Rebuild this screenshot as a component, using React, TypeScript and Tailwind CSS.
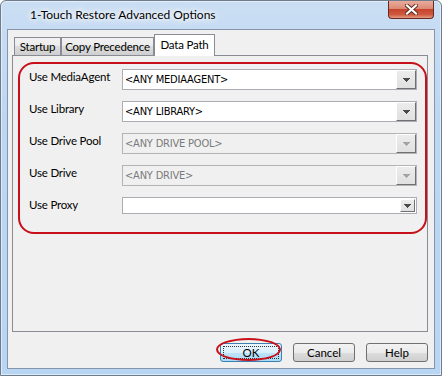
import React from 'react';

const ui = "font-['Lato','Noto_Sans',sans-serif]";
const shell = "font-['DejaVu_Sans_Condensed','DejaVu_Sans',sans-serif]";

function Arrow({ disabled }: { disabled?: boolean }) {
  const c = disabled ? '#a3a3a3' : '#4a4a4a';
  return (
    <svg width="7" height="4" viewBox="0 0 7 4" shapeRendering="crispEdges">
      <rect x="0" y="0" width="7" height="1" fill={c} />
      <rect x="1" y="1" width="5" height="1" fill={c} />
      <rect x="2" y="2" width="3" height="1" fill={c} />
      <rect x="3" y="3" width="1" height="1" fill={c} />
    </svg>
  );
}

function Combo({ value, disabled, small }: { value?: string; disabled?: boolean; small?: boolean }) {
  return (
    <div
      className={`flex flex-1 border ${small ? 'h-[17px]' : 'h-[21px]'} ${
        disabled ? 'border-[#b4b4b4] bg-[#f0f0f0] text-[#7a7a7a]' : 'border-[#abadb3] bg-white text-black'
      }`}
    >
      <div className={`flex flex-1 items-center pl-[2px] text-[11px] leading-none tracking-[-0.2px] ${shell}`}>{value}</div>
      <div className={`flex items-center justify-center ${small ? 'my-[1px] mr-[1px] w-[15px]' : 'w-[20px]'} border border-t-white border-l-white border-r-[#707070] border-b-[#707070] bg-[linear-gradient(#ececec,#e0e0e0)]`}>
        <Arrow disabled={disabled} />
      </div>
    </div>
  );
}

function Row({ label, children }: { label: string; children: React.ReactNode }) {
  return (
    <div className="flex items-start">
      <div className="w-[93px] pt-[1px] text-[11.5px] leading-[14px] tracking-[-0.2px] text-black">{label}</div>
      {children}
    </div>
  );
}

function Tab({ label, selected, w }: { label: string; selected?: boolean; w: string }) {
  if (selected) {
    return (
      <div className={`${w} flex h-[22px] justify-center whitespace-nowrap border border-b-0 border-[#898c95] bg-white pt-[3px] text-[11.5px] leading-[14px] tracking-[-0.2px]`}>
        {label}
      </div>
    );
  }
  return (
    <div className={`${w} mb-[1px] flex h-[18px] justify-center whitespace-nowrap border border-b-0 border-[#898c95] bg-[linear-gradient(#f2f2f2,#ebebeb_50%,#dddddd_50%,#cfcfcf)] pt-[2px] text-[11.5px] leading-[14px] tracking-[-0.2px]`}>
      {label}
    </div>
  );
}

function Button({ label, primary }: { label: string; primary?: boolean }) {
  if (primary) {
    return (
      <div className="relative">
        <div className="flex h-[19px] w-[62px] items-center justify-center rounded-[3px] border border-[#3c7fb1] bg-[linear-gradient(#eaf6fd,#d9f0fc_50%,#bee6fd_50%,#a7d9f5)] p-[2px]">
          <div className="flex h-full w-full items-center justify-center border border-dotted border-[#333] text-[11.5px] leading-none">
            {label}
          </div>
        </div>
        <span className="absolute top-[-5px] right-[1px] bottom-[1px] left-[-4px] rounded-[50%] border-2 border-[#c8101a]" />
      </div>
    );
  }
  return (
    <div className="flex h-[19px] w-[62px] items-center justify-center rounded-[3px] border border-[#707070] bg-[linear-gradient(#f2f2f2,#ebebeb_50%,#dddddd_50%,#cfcfcf)] text-[11.5px] leading-none">
      {label}
    </div>
  );
}

export default function App() {
  return (
    <div className={`h-[376px] w-[442px] overflow-hidden bg-white ${ui}`}>
      <div className="flex h-full w-full flex-col rounded-t-[6px] border border-[#6f7c8b] bg-[linear-gradient(#cadef3,#bdd7f3_30%,#b8d5f4)] shadow-[inset_0_0_0_1px_rgba(255,255,255,0.5)]">
        {/* title bar */}
        <div className="flex h-[28px] items-start justify-between">
          <div className="pt-[7px] pl-[29px] text-[12px] leading-[14px] text-black [text-shadow:0_0_8px_#fff,0_0_8px_#fff,0_0_4px_#fff]">
            1-Touch Restore Advanced Options
          </div>
          <div className="mr-[7px] flex h-[18px] w-[46px] items-center justify-center rounded-b-[4px] border border-t-0 border-[#6b2a20] bg-[linear-gradient(#e9ab9d,#dc8a76_45%,#c7432c_50%,#cf5a40_80%,#e39a80)]">
            <svg width="13" height="11" viewBox="0 0 13 11">
              <path d="M2 1.5 L11 9.5 M11 1.5 L2 9.5" stroke="#5a2a22" strokeWidth="4" strokeLinecap="square" />
              <path d="M2 1.5 L11 9.5 M11 1.5 L2 9.5" stroke="#ffffff" strokeWidth="2.2" strokeLinecap="square" />
            </svg>
          </div>
        </div>

        {/* client */}
        <div className="mx-[6px] mb-[6px] flex flex-1 flex-col border border-[#8596aa] bg-[#f0f0f0] text-black">
          <div className="ml-[4px] mr-[6px] mt-[4px] flex flex-col">
            <div className="relative z-10 -mb-px flex h-[22px] items-end pl-[2px]">
              <Tab label="Startup" w="w-[47px]" />
              <Tab label="Copy Precedence" w="w-[93px]" />
              <Tab label="Data Path" w="w-[61px]" selected />
            </div>
            <div className="h-[277px] border border-[#898c95] bg-[#f0f0f0] pl-[5px] pt-[6px]">
              <div className="flex w-[409px] flex-col gap-[11px] rounded-[16px] border-2 border-[#c8101a] pt-[5px] pr-[8px] pb-[18px] pl-[9px]">
                <Row label="Use MediaAgent">
                  <Combo value="<ANY MEDIAAGENT>" />
                </Row>
                <Row label="Use Library">
                  <Combo value="<ANY LIBRARY>" />
                </Row>
                <Row label="Use Drive Pool">
                  <Combo value="<ANY DRIVE POOL>" disabled />
                </Row>
                <Row label="Use Drive">
                  <Combo value="<ANY DRIVE>" disabled />
                </Row>
                <Row label="Use Proxy">
                  <Combo small />
                </Row>
              </div>
            </div>
          </div>
          <div className="mt-[11px] flex justify-end gap-[11px] pr-[6px]">
            <Button label="OK" primary />
            <Button label="Cancel" />
            <Button label="Help" />
          </div>
        </div>
      </div>
    </div>
  );
}
